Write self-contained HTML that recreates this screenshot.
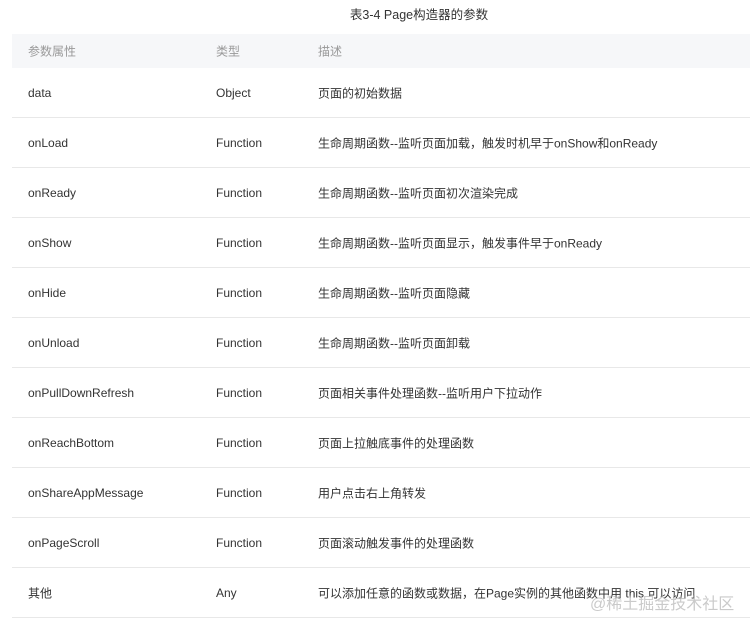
<!DOCTYPE html>
<html><head><meta charset="utf-8"><style>
body{margin:0;width:750px;height:628px;background:#fff;overflow:hidden;font-family:"Liberation Sans","Noto Sans CJK SC",sans-serif;color:#333;font-size:12px}
.t{position:absolute;top:4px;left:0;width:838px;text-align:center;font-size:12.5px;color:#333}
.tbl{position:absolute;left:12px;top:34px;width:738px}
.r{position:relative;height:49px;border-bottom:1px solid #e8e8e8}
.h{height:34px;background:#f6f7f9;border:none;color:#999}
.r span{position:absolute;top:50%;transform:translateY(-50%);white-space:nowrap}
.a{left:16px}.b{left:204px}.c{left:306px}
.wm{position:absolute;left:590px;top:590px;font-size:16px;color:rgba(180,180,180,.7)}
</style></head><body>
<div class="t">表3-4 Page构造器的参数</div>
<div class="tbl">
<div class="r h"><span class="a">参数属性</span><span class="b">类型</span><span class="c">描述</span></div>
<div class="r"><span class="a">data</span><span class="b">Object</span><span class="c">页面的初始数据</span></div>
<div class="r"><span class="a">onLoad</span><span class="b">Function</span><span class="c">生命周期函数--监听页面加载，触发时机早于onShow和onReady</span></div>
<div class="r"><span class="a">onReady</span><span class="b">Function</span><span class="c">生命周期函数--监听页面初次渲染完成</span></div>
<div class="r"><span class="a">onShow</span><span class="b">Function</span><span class="c">生命周期函数--监听页面显示，触发事件早于onReady</span></div>
<div class="r"><span class="a">onHide</span><span class="b">Function</span><span class="c">生命周期函数--监听页面隐藏</span></div>
<div class="r"><span class="a">onUnload</span><span class="b">Function</span><span class="c">生命周期函数--监听页面卸载</span></div>
<div class="r"><span class="a">onPullDownRefresh</span><span class="b">Function</span><span class="c">页面相关事件处理函数--监听用户下拉动作</span></div>
<div class="r"><span class="a">onReachBottom</span><span class="b">Function</span><span class="c">页面上拉触底事件的处理函数</span></div>
<div class="r"><span class="a">onShareAppMessage</span><span class="b">Function</span><span class="c">用户点击右上角转发</span></div>
<div class="r"><span class="a">onPageScroll</span><span class="b">Function</span><span class="c">页面滚动触发事件的处理函数</span></div>
<div class="r"><span class="a">其他</span><span class="b">Any</span><span class="c">可以添加任意的函数或数据，在Page实例的其他函数中用 this 可以访问</span></div>
</div>
<div class="wm">@稀土掘金技术社区</div>
</body></html>
